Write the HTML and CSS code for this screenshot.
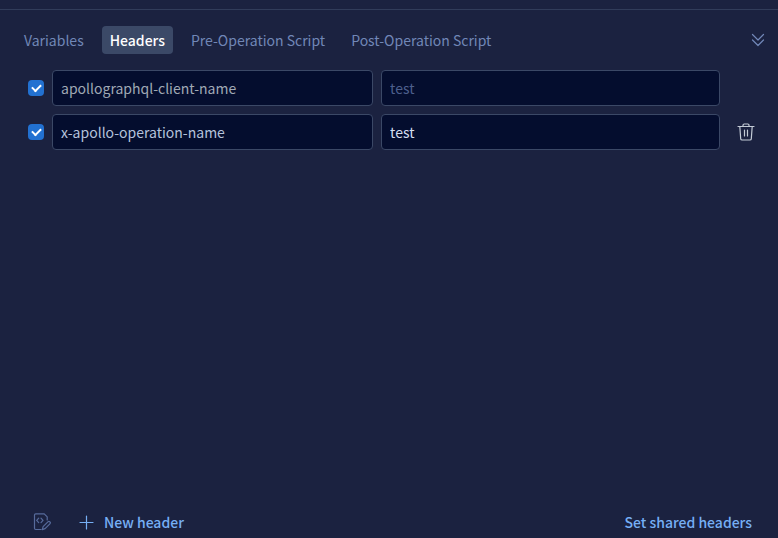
FILE: index.html
```html
<!DOCTYPE html>
<html lang="en">
<head>
<meta charset="utf-8">
<meta name="viewport" content="width=device-width, initial-scale=1">
<title>Headers</title>
<link rel="stylesheet" href="styles.css">
</head>
<body>
<main class="panel">
  <nav class="tabs">
    <button class="tab" type="button">Variables</button>
    <button class="tab tab-active" type="button">Headers</button>
    <button class="tab" type="button">Pre-Operation Script</button>
    <button class="tab" type="button">Post-Operation Script</button>
    <button class="icon-button collapse" type="button" aria-label="Collapse">
      <svg width="16" height="16" viewBox="0 0 16 16"><path d="M2.500 2.500 8 8l5.500-5.500M2.500 8 8 13.500 13.500 8"/></svg>
    </button>
  </nav>
  <form class="rows">
    <div class="row">
      <input class="check" type="checkbox" checked aria-label="Enable apollographql-client-name">
      <input class="field field-fixed" type="text" value="apollographql-client-name" aria-label="Header name">
      <input class="field" type="text" placeholder="test" aria-label="Header value">
    </div>
    <div class="row">
      <input class="check" type="checkbox" checked aria-label="Enable x-apollo-operation-name">
      <input class="field" type="text" value="x-apollo-operation-name" aria-label="Header name">
      <input class="field field-value" type="text" value="test" aria-label="Header value">
      <button class="icon-button trash" type="button" aria-label="Delete header">
        <svg width="18" height="18" viewBox="0 0 18 18"><path d="M1 3.500h16M2.800 3.500l.9 12.300a1.400 1.400 0 0 0 1.400 1.200h7.800a1.400 1.400 0 0 0 1.400-1.200l.9-12.300M6 3.300V2.200A1.200 1.200 0 0 1 7.200 1h3.600A1.200 1.200 0 0 1 12 2.200v1.100M7.500 7v6M10.500 7v6"/></svg>
      </button>
    </div>
  </form>
  <footer class="footer">
    <button class="icon-button edit" type="button" aria-label="Edit as code">
      <svg width="18" height="18" viewBox="0 0 18 18"><path d="M8 16.500H2.700A1.200 1.200 0 0 1 1.500 15.300V2A1.200 1.200 0 0 1 2.700.8h8.500l3 3v3.200M5.700 5.200 3.700 7.400l2 2.200M8 5.200l2 2.200-2 2.200M9.300 16.600l.8-3 4.800-4.800a1.400 1.400 0 0 1 2 2l-4.800 4.800z"/></svg>
    </button>
    <button class="action" type="button">
      <svg width="16" height="16" viewBox="0 0 16 16"><path d="M8.500 2v13M2 8.500h13"/></svg>
      New header
    </button>
    <button class="action shared" type="button">Set shared headers</button>
  </footer>
</main>
</body>
</html>
```
FILE: styles.css
```css
* {
  box-sizing: border-box;
}

body {
  margin: 0;
  background: #1b2240;
}

body,
button,
input {
  font-family: "Noto Sans CJK SC", "Noto Sans", sans-serif;
  font-size: 14px;
  line-height: 20px;
}

button {
  padding: 0;
  border: 0;
  background: none;
  color: inherit;
}

svg {
  display: block;
  fill: none;
  stroke: currentColor;
  stroke-width: 1.2;
  stroke-linecap: round;
  stroke-linejoin: round;
}

.panel {
  display: flex;
  flex-direction: column;
  min-height: 100vh;
  padding-top: 9px;
}

.tabs {
  display: flex;
  align-items: center;
  gap: 10px;
  padding: 16px 12px 16px 16px;
  border-top: 1px solid #313c5a;
}

.tab {
  padding: 4px 8px;
  border-radius: 4px;
  color: #7187b7;
}

.tab-active {
  background: #3b4967;
  color: #fff;
  font-weight: 500;
}

.icon-button {
  display: grid;
  place-items: center;
}

.collapse {
  margin-left: auto;
  color: #7187b7;
}

.rows {
  display: grid;
  gap: 8px;
  padding: 0 14px 0 28px;
}

.row {
  display: grid;
  grid-template-columns: 16px 18fr 19fr 36px;
  align-items: center;
  gap: 8px;
}

.check {
  appearance: none;
  width: 16px;
  height: 16px;
  margin: 0;
  border-radius: 4px;
  background: #2271d1;
  display: grid;
  place-items: center;
}

.check:checked::before {
  content: "";
  box-sizing: border-box;
  width: 9px;
  height: 6px;
  border: solid #fff;
  border-width: 0 0 2px 2px;
  transform: translateY(-1px) rotate(-45deg);
}

.field {
  width: 100%;
  min-width: 0;
  height: 36px;
  padding: 0 8px;
  border: 1px solid #3b4866;
  border-radius: 4px;
  background: #040d2e;
  color: #b4c2dc;
}

.field-fixed {
  color: #a0a9b5;
}

.field-value {
  color: #d5dff0;
}

.field::placeholder {
  color: #4d5f8c;
  opacity: 1;
}

.trash {
  color: #c3cbd6;
}

.footer {
  display: flex;
  align-items: center;
  margin-top: auto;
  padding: 6px 26px 6px 33px;
}

.edit {
  color: #576b9b;
}

.action {
  display: flex;
  align-items: center;
  gap: 10px;
  margin-left: 27px;
  color: #76aff5;
  font-weight: 500;
}

.shared {
  margin-left: auto;
}
```
